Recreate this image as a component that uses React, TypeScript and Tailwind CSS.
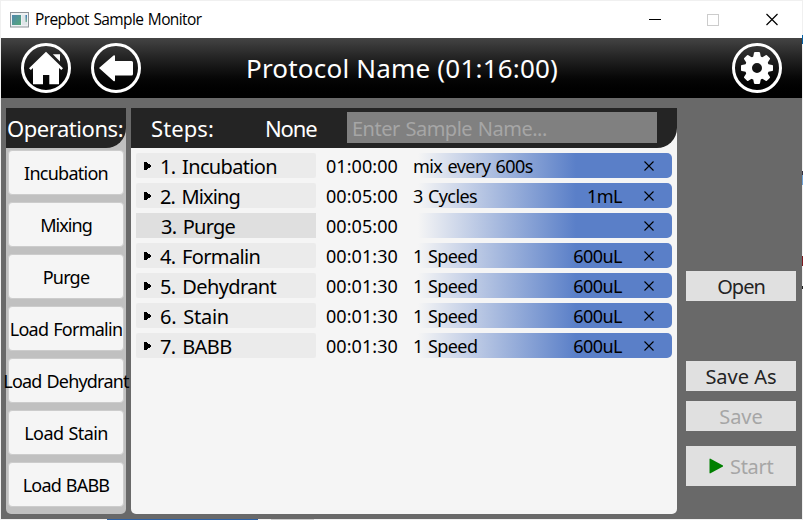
import React from "react";

const operations = [
  { label: "Incubation", cls: "tracking-[-0.75px]" },
  { label: "Mixing", cls: "tracking-[-0.95px]" },
  { label: "Purge", cls: "tracking-[-0.8px]" },
  { label: "Load Formalin", cls: "tracking-[-0.74px] [word-spacing:1px]" },
  { label: "Load Dehydrant", cls: "tracking-[-0.8px] [word-spacing:1px]" },
  { label: "Load Stain", cls: "tracking-[-0.6px] [word-spacing:1px]" },
  { label: "Load BABB", cls: "tracking-[-0.8px] [word-spacing:1px]" },
];

const steps = [
  { name: "1. Incubation", cls: "tracking-[-0.65px]", time: "01:00:00", detail: "mix every 600s", amount: "" },
  { name: "2. Mixing", cls: "tracking-[-0.85px]", time: "00:05:00", detail: "3 Cycles", amount: "1mL" },
  { name: "3. Purge", cls: "tracking-[-0.75px]", time: "00:05:00", detail: "", amount: "", active: true },
  { name: "4. Formalin", cls: "tracking-[-0.65px]", time: "00:01:30", detail: "1 Speed", amount: "600uL" },
  { name: "5. Dehydrant", cls: "tracking-[-0.6px]", time: "00:01:30", detail: "1 Speed", amount: "600uL" },
  { name: "6. Stain", cls: "tracking-[-0.25px]", time: "00:01:30", detail: "1 Speed", amount: "600uL" },
  { name: "7. BABB", cls: "tracking-[-0.6px]", time: "00:01:30", detail: "1 Speed", amount: "600uL" },
];

function TitleBar() {
  return (
    <div className="flex h-[37px] shrink-0 items-center bg-white">
      <svg className="ml-[9px] h-4 w-[19px]" viewBox="0 0 19 16">
        <defs>
          <linearGradient id="screen" x1="0" y1="0" x2="1" y2="1">
            <stop offset="0" stopColor="#4f86ad" />
            <stop offset="1" stopColor="#55a878" />
          </linearGradient>
          <linearGradient id="side" x1="0" y1="0" x2="0" y2="1">
            <stop offset="0" stopColor="#3f78b8" />
            <stop offset="1" stopColor="#7cb894" />
          </linearGradient>
        </defs>
        <rect x="0.5" y="0.5" width="18" height="14.5" fill="#eef1f3" stroke="#8e9499" />
        <rect x="2" y="3" width="9" height="10" fill="url(#screen)" />
        <rect x="12" y="3" width="5" height="10" fill="#dfe5e8" />
        <rect x="15.5" y="3" width="1.5" height="7" fill="url(#side)" />
      </svg>
      <div className="ml-[6px] font-['Open_Sans','Noto_Sans',sans-serif] text-[15.5px] leading-[37px] tracking-[-0.6px] text-black [word-spacing:1px]">
        Prepbot Sample Monitor
      </div>
      <svg className="ml-auto mr-[24px] h-[13px] w-[130px]" viewBox="0 0 130 13" fill="none" shapeRendering="crispEdges">
        <path d="M1 6.5H13" stroke="#000" />
        <rect x="59.5" y="1.5" width="11" height="11" stroke="#ccc" />
        <path d="M118.5 1L129.5 12M129.5 1L118.5 12" stroke="#000" strokeWidth="1.2" shapeRendering="auto" />
      </svg>
    </div>
  );
}

function HomeIcon() {
  return (
    <svg className="h-[50px] w-[50px]" viewBox="0 0 50 50" fill="#fff">
      <circle cx="25" cy="25" r="23.5" fill="none" stroke="#fff" strokeWidth="3" />
      <path d="M25 8.8L42 25.2L40.3 27L38 25V41.3H28.3V32H22V41.3H12V25L9.8 27L8 25.2Z" />
      <path d="M31.8 11.2H39V18.6Z" />
    </svg>
  );
}

function BackIcon() {
  return (
    <svg className="h-[50px] w-[50px]" viewBox="0 0 50 50" fill="#fff">
      <circle cx="25" cy="25" r="23.5" fill="none" stroke="#fff" strokeWidth="3" />
      <path d="M8 25L22.5 12.6Q24 11.8 24 13.5V18H40.5Q42 18 42 19.5V31Q42 32.5 40.5 32.5H24V37.2Q24 39 22.5 37.9Z" />
    </svg>
  );
}

function GearIcon() {
  return (
    <svg className="h-[50px] w-[50px]" viewBox="0 0 50 50" fill="#fff">
      <circle cx="25" cy="25" r="23.5" fill="none" stroke="#fff" strokeWidth="3" />
      <g>
        {[0, 45, 90, 135, 180, 225, 270, 315].map((a) => (
          <path key={a} d="M21 15L22 9.8Q22.2 9 23 9H27Q27.8 9 28 9.8L29 15Z" transform={`rotate(${a} 25 25)`} />
        ))}
        <circle cx="25" cy="25" r="8.5" fill="none" stroke="#fff" strokeWidth="7" />
      </g>
    </svg>
  );
}

function Operations() {
  return (
    <div className="h-[406px] w-[120px] rounded-b-[5px] bg-[#c0c0c0]">
      <div className="flex h-10 whitespace-nowrap rounded-br-[20px] bg-[#242424] pl-px text-[22px] leading-[41px] tracking-[-0.45px] text-white">
        Operations:
      </div>
      <div className="flex flex-col items-center gap-[7px] pt-[2px]">
        {operations.map((o) => (
          <div
            key={o.label}
            className="flex h-[45px] w-[116px] justify-center whitespace-nowrap rounded-[4px] border border-[#ccc] bg-[#f5f5f5] text-[18px] leading-[45px] text-black"
          >
            <span className={o.cls}>{o.label}</span>
          </div>
        ))}
      </div>
    </div>
  );
}

function Steps() {
  return (
    <div className="h-[406px] w-[546px] rounded-b-[5px] bg-[#f5f5f5]">
      <div className="flex h-10 rounded-br-[20px] bg-[#242424] text-[22px] leading-[41px] text-white">
        <div className="w-[114px] pl-5 tracking-[0.1px]">Steps:</div>
        <div className="w-[102px] pl-5 tracking-[-1.1px]">None</div>
        <div className="mt-1 h-[31px] w-[310px] whitespace-nowrap bg-[#808080] pl-[5px] text-[20px] leading-[33px] tracking-[-0.5px] text-[#a6a6a6] [word-spacing:1px]">
          Enter Sample Name...
        </div>
      </div>
      <div className="flex flex-col gap-[5px] px-[5px] pt-[5px] text-[18px] leading-[27px] text-black">
        {steps.map((s) => (
          <div key={s.name} className="flex h-[25px]">
            <div
              className={
                s.active
                  ? "flex w-[180px] bg-[#dfdfdf] pl-[25px] text-[20px] [word-spacing:2px]"
                  : "flex w-[180px] rounded-[2px] bg-[#ebebeb] pl-[8px] text-[20px] [word-spacing:2px]"
              }
            >
              {!s.active && (
                <svg className="mr-[9px] mt-[9px] h-[8px] w-[7px]" viewBox="0 0 7 8" shapeRendering="crispEdges">
                  <path d="M0 0H2L7 3V5L2 8H0Z" />
                </svg>
              )}
              <span className={s.cls}>{s.name}</span>
            </div>
            <div className="w-[97px] pl-[10px] tracking-[0.05px]">{s.time}</div>
            <div className="-ml-[5px] flex w-[264px] whitespace-nowrap rounded-[5px] bg-[linear-gradient(90deg,#f5f5f5_10px,#5a7fc8_168px)] pl-[5px] tracking-[-0.55px] [word-spacing:1px]">
              <div className="w-[120px]">{s.detail}</div>
              <div className="w-[89px] text-right">{s.amount}</div>
              <svg className="ml-[22px] mt-[8px] h-[10px] w-[10px]" viewBox="0 0 10 10">
                <path d="M0.5 0.5L9.5 9.5M9.5 0.5L0.5 9.5" stroke="#000" strokeWidth="1.1" />
              </svg>
            </div>
          </div>
        ))}
      </div>
    </div>
  );
}

function SideButtons() {
  return (
    <div className="flex w-[110px] flex-col pt-[163px] text-[20px] text-[#242424]">
      <div className="h-[30px] bg-[#e0e0e0] text-center leading-[32px] tracking-[-1px]">Open</div>
      <div className="mt-[60px] h-[30px] bg-[#e0e0e0] text-center leading-[32px]">Save As</div>
      <div className="mt-[10px] h-[30px] bg-[#e0e0e0] text-center leading-[32px] text-[#a6a6a6]">Save</div>
      <div className="mt-[15px] flex h-[40px] bg-[#e0e0e0] leading-[42px] text-[#a6a6a6]">
        <svg className="ml-[23px] mr-[7px] mt-[12px] h-[16px] w-[14px]" viewBox="0 0 14 16">
          <path d="M1 0.5L14 7.5V8.5L1 15.5L0.5 15V1Z" fill="#008000" />
        </svg>
        <span className="tracking-[-0.3px]">Start</span>
      </div>
    </div>
  );
}

export default function App() {
  return (
    <div className="flex h-[520px] w-[803px] overflow-hidden bg-[#f0f0f0] pt-px font-['Noto_Sans','DejaVu_Sans',sans-serif]">
      <div className="ml-px flex w-[801px] shrink-0 flex-col">
        <TitleBar />
        <div className="flex h-[60px] shrink-0 items-center bg-linear-to-b from-[#444] to-black text-white">
          <div className="ml-5 flex gap-5">
            <HomeIcon />
            <BackIcon />
          </div>
          <div className="ml-[105px] w-[320px] whitespace-nowrap text-[26px] leading-[60px] tracking-[0.2px]">
            Protocol Name (01:16:00)
          </div>
          <div className="ml-auto mr-5">
            <GearIcon />
          </div>
        </div>
        <div className="flex h-[421px] shrink-0 bg-[#696969] pl-[5px] pt-[10px]">
          <Operations />
          <div className="ml-[5px]">
            <Steps />
          </div>
          <div className="ml-[9px]">
            <SideButtons />
          </div>
        </div>
        <div className="flex h-px">
          <div className="w-[106px]" />
          <div className="w-[151px] bg-[#2d62a8]" />
          <div className="w-[13px]" />
          <div className="w-[43px] bg-[#ccc]" />
        </div>
      </div>
      <div className="flex w-px flex-col">
        <div className="mt-[34px] h-[9px] bg-[#0563a8]" />
        <div className="mt-[127px] h-[4px] bg-[#334]" />
        <div className="h-[10px] bg-[#6fa3d8]" />
        <div className="mt-[71px] h-[10px] bg-[#7d1a20]" />
        <div className="mt-[20px] h-[3px] bg-[#222]" />
      </div>
    </div>
  );
}
